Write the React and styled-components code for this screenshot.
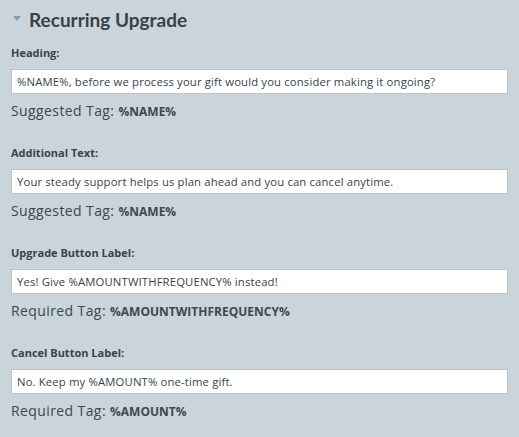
import React from 'react'
import styled, { createGlobalStyle } from 'styled-components'

const GlobalStyle = createGlobalStyle`
  html, body {
    margin: 0;
    padding: 0;
    background: #c9d4db;
  }
  body {
    font-family: "Open Sans", Lato, Arial, sans-serif;
    color: #3b4248;
  }
`

const Panel = styled.div`
  width: 519px;
  height: 437px;
  padding: 0 11px;
  box-sizing: border-box;
  background: #c9d4db;
  overflow: hidden;
`

const Header = styled.div`
  display: flex;
  align-items: center;
  height: 38px;
  gap: 8px;
  padding-left: 2px;
`

const Caret = styled.span`
  width: 0;
  height: 0;
  border-left: 4px solid transparent;
  border-right: 4px solid transparent;
  border-top: 5px solid #8e99a2;
  margin-top: -2px;
`

const Title = styled.h2`
  margin: 0;
  font-family: Lato, "Open Sans", sans-serif;
  font-size: 19px;
  font-weight: 700;
  color: #3a4147;
`

const Field = styled.div`
  display: flex;
  flex-direction: column;
  padding-top: 8px;
  height: 92px;
`

const Label = styled.label`
  font-size: 11px;
  font-weight: 700;
  line-height: 14px;
  color: #3b4248;
  margin-bottom: 9px;
`

const Input = styled.input`
  box-sizing: border-box;
  width: 497px;
  height: 25px;
  border: 1px solid #bcc5cb;
  background: #fff;
  padding: 0 5px;
  font-family: inherit;
  font-size: 11.3px;
  letter-spacing: 0.15px;
  color: #3b4248;
  outline: none;
`

const Tag = styled.div`
  margin-top: 8px;
  font-size: 14px;
  line-height: 18px;
  letter-spacing: 0.4px;
  color: #40474d;
  b {
    font-size: 12px;
    font-weight: 700;
    letter-spacing: 0;
  }
`

const fields = [
  { label: 'Heading:', value: '%NAME%, before we process your gift would you consider making it ongoing?', kind: 'Suggested', tag: '%NAME%' },
  { label: 'Additional Text:', value: 'Your steady support helps us plan ahead and you can cancel anytime.', kind: 'Suggested', tag: '%NAME%' },
  { label: 'Upgrade Button Label:', value: 'Yes! Give %AMOUNTWITHFREQUENCY% instead!', kind: 'Required', tag: '%AMOUNTWITHFREQUENCY%' },
  { label: 'Cancel Button Label:', value: 'No. Keep my %AMOUNT% one-time gift.', kind: 'Required', tag: '%AMOUNT%' },
]

export default function App() {
  return (
    <>
      <GlobalStyle />
      <Panel>
        <Header>
          <Caret />
          <Title>Recurring Upgrade</Title>
        </Header>
        {fields.map((f) => (
          <Field key={f.label}>
            <Label>{f.label}</Label>
            <Input defaultValue={f.value} readOnly />
            <Tag>
              {f.kind} Tag: <b>{f.tag}</b>
            </Tag>
          </Field>
        ))}
      </Panel>
    </>
  )
}
